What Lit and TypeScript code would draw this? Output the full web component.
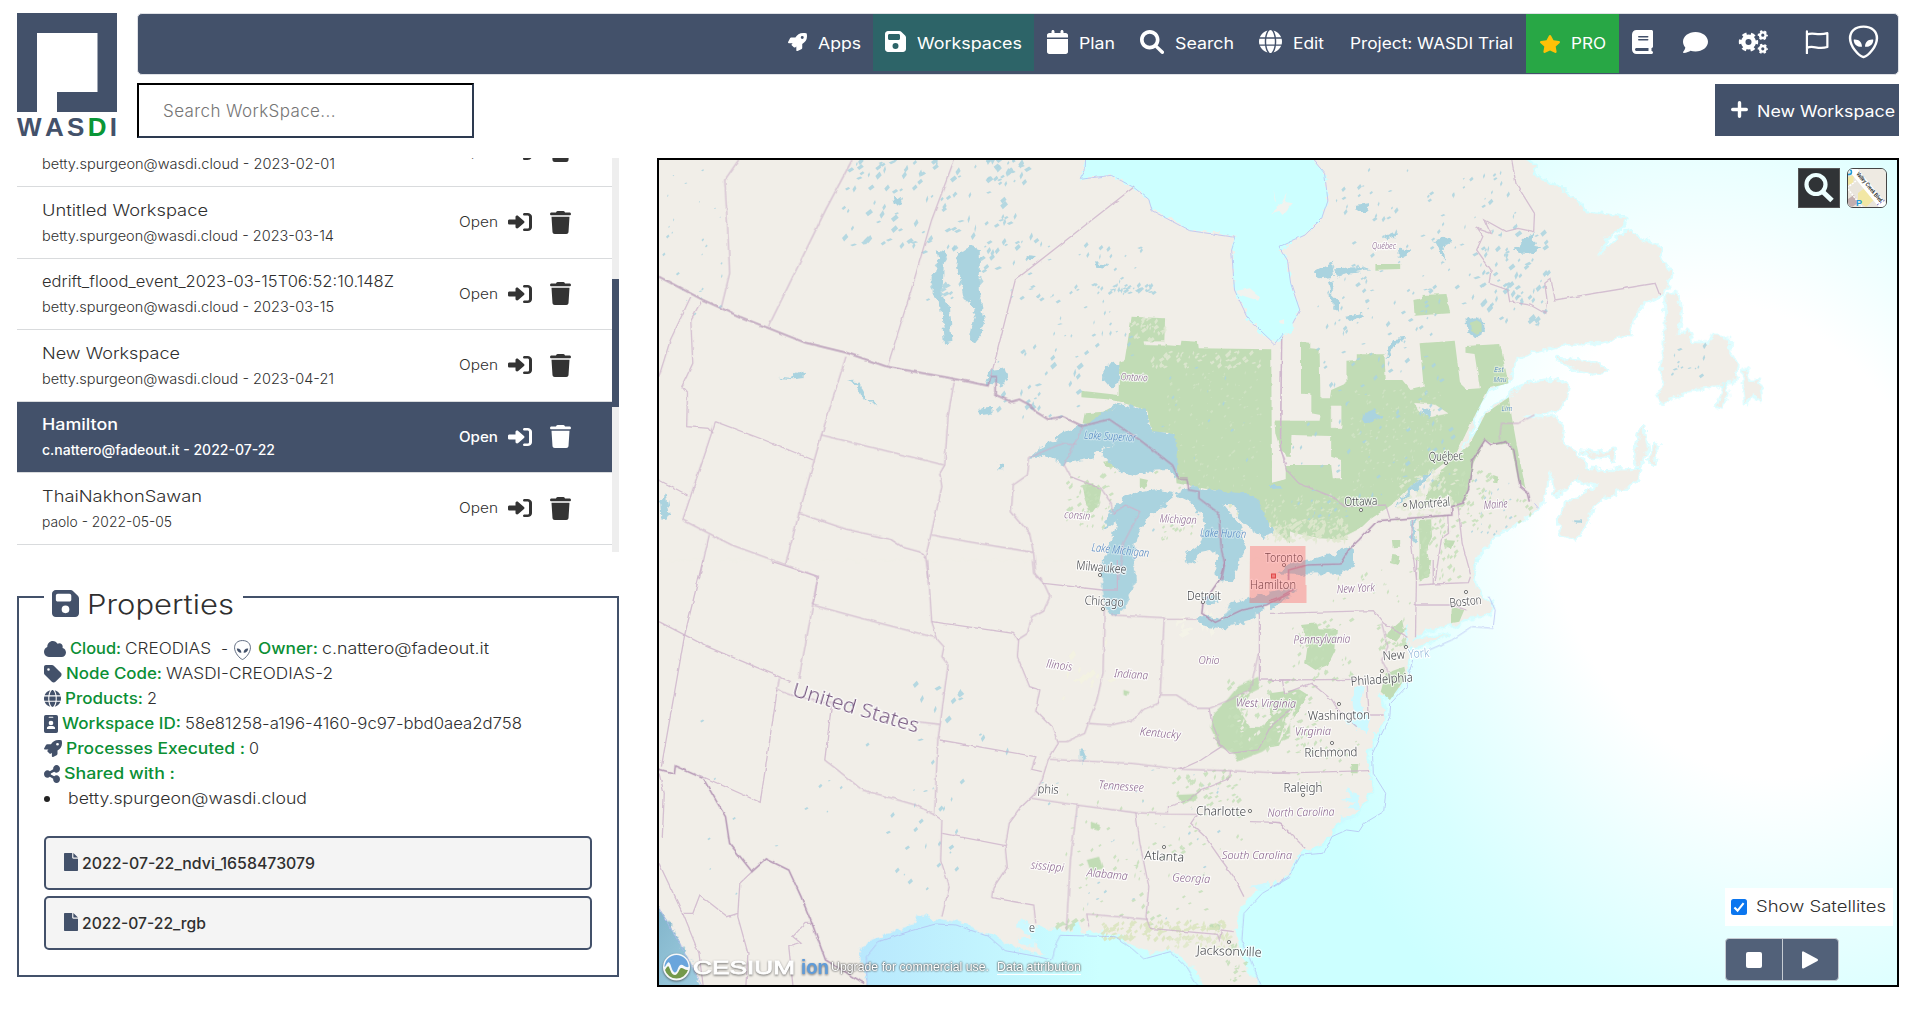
import { LitElement, html, svg, css } from "lit";
import { customElement, property } from "lit/decorators.js";

/* ---------- icons ---------- */
type Glyph = { box: string; body: unknown };
const p = (box: string, d: string): Glyph => ({ box, body: svg`<path fill="currentColor" fill-rule="evenodd" d=${d}></path>` });
const gear = (x: number, y: number, r: number, teeth: number) => {
  const c = 2 * Math.PI * r;
  const dash = c / teeth / 2;
  return svg`<circle cx=${x} cy=${y} r=${r * 0.66} fill="none" stroke="currentColor" stroke-width=${r * 0.56}></circle>
    <circle cx=${x} cy=${y} r=${r} fill="none" stroke="currentColor" stroke-width=${r * 0.42} stroke-dasharray="${dash} ${dash}" stroke-dashoffset=${dash / 2}></circle>`;
};
const GLYPHS: Record<string, Glyph> = {
  rocket: p("0 0 512 512", "M505.1 19.1c-1.2-5.5-6.7-11-12.2-12.2C460.7 0 435.5 0 410.4 0 307.2 0 245.3 55.2 199 128H94.8c-16.3 0-35.5 11.9-42.9 26.5L2.5 253.3A28.4 28.4 0 0 0 0 264a24 24 0 0 0 24 24h103.8l-22.5 22.5c-11.4 11.3-13 32.2 0 45.2l50.9 50.9c11.2 11.2 32.2 13.2 45.3 0L224 384.2V488a24 24 0 0 0 24 24 28.6 28.6 0 0 0 10.7-2.5l98.7-49.4c14.7-7.3 26.5-26.5 26.5-42.9V312.8C456.5 266.5 512 204.4 512 101.7c0-25.2 0-50.4-6.9-82.6ZM384 168a40 40 0 1 1 40-40 40 40 0 0 1-40 40Z"),
  save: p("0 32 448 448", "M64 32C28.7 32 0 60.7 0 96V416c0 35.3 28.7 64 64 64H384c35.3 0 64-28.7 64-64V173.3c0-17-6.7-33.3-18.7-45.3L352 50.7C340 38.7 323.7 32 306.7 32H64zm0 96c0-17.7 14.3-32 32-32H288c17.7 0 32 14.3 32 32v64c0 17.7-14.3 32-32 32H96c-17.7 0-32-14.3-32-32V128zM224 288a64 64 0 1 1 0 128 64 64 0 1 1 0-128z"),
  calendar: p("0 0 448 512", "M96 32V64H48C21.5 64 0 85.5 0 112v48H448V112c0-26.5-21.5-48-48-48H352V32c0-17.7-14.3-32-32-32s-32 14.3-32 32V64H160V32c0-17.7-14.3-32-32-32S96 14.3 96 32zM448 192H0V464c0 26.5 21.5 48 48 48H400c26.5 0 48-21.5 48-48V192z"),
  search: p("0 0 512 512", "M416 208c0 45.9-14.9 88.3-40 122.7L502.6 450c14 14 14 38 0 52s-38 14-52 0L325 380c-34 24-74 36-117 36C93.1 416 0 322.9 0 208S93.1 0 208 0S416 93.1 416 208zM208 338a130 130 0 1 0 0-260 130 130 0 1 0 0 260z"),
  globe: p("0 0 512 512", "M352 256c0 22.2-1.2 43.6-3.3 64H163.3c-2.2-20.4-3.3-41.8-3.3-64s1.2-43.6 3.3-64H348.7c2.2 20.4 3.3 41.8 3.3 64zm28.8-64H503.9c5.3 20.5 8.1 41.9 8.1 64s-2.8 43.5-8.1 64H380.8c2.1-20.6 3.2-42 3.2-64s-1.1-43.4-3.2-64zm112.6-32H376.7c-10-63.9-29.8-117.4-55.3-151.6c78.3 20.7 142 77.5 171.9 151.6zm-149.1 0H167.7c6.1-36.4 15.5-68.6 27-94.7c10.5-23.6 22.2-40.7 33.5-51.5C239.4 3.2 248.7 0 256 0s16.6 3.2 27.8 13.8c11.3 10.8 23 27.9 33.5 51.5c11.6 26 20.9 58.2 27 94.7zm-209 0H18.6C48.6 85.9 112.2 29.1 190.6 8.4C165.1 42.6 145.3 96.1 135.3 160zM8.1 192H131.2c-2.1 20.6-3.2 42-3.2 64s1.1 43.4 3.2 64H8.1C2.8 299.5 0 278.1 0 256s2.8-43.5 8.1-64zM194.7 446.6c-11.6-26-20.9-58.2-27-94.6H344.3c-6.1 36.4-15.5 68.6-27 94.6c-10.5 23.6-22.2 40.7-33.5 51.5C272.6 508.8 263.3 512 256 512s-16.6-3.2-27.8-13.8c-11.3-10.8-23-27.9-33.5-51.5zM135.3 352c10 63.9 29.8 117.4 55.3 151.6C112.2 482.9 48.6 426.1 18.6 352H135.3zm358.1 0c-30 74.1-93.6 130.9-171.9 151.6c25.5-34.2 45.2-87.7 55.3-151.6H493.4z"),
  star: p("24 0 528 512", "M316.9 18C311.6 7 300.4 0 288.1 0s-23.4 7-28.8 18L195 150.3 51.4 171.5c-12 1.8-22 10.2-25.7 21.7s-.7 24.2 7.9 32.7L137.8 329 113.2 474.7c-2 12 3 24.2 12.9 31.3s23 8 33.8 2.3l128.3-68.5 128.3 68.5c10.8 5.7 23.9 4.9 33.8-2.3s14.9-19.3 12.9-31.3L438.5 329 542.7 225.9c8.6-8.5 11.7-21.2 7.9-32.7s-13.7-19.9-25.7-21.7L381.2 150.3 316.9 18z"),
  book: p("0 0 448 512", "M96 0C43 0 0 43 0 96V416c0 53 43 96 96 96H384h32c17.7 0 32-14.3 32-32s-14.3-32-32-32V384c17.7 0 32-14.3 32-32V32c0-17.7-14.3-32-32-32H384 96zm0 384H352v64H96c-17.7 0-32-14.3-32-32s14.3-32 32-32zm32-240c0-8.8 7.2-16 16-16H336c8.8 0 16 7.2 16 16s-7.2 16-16 16H144c-8.8 0-16-7.2-16-16zm16 48H336c8.8 0 16 7.2 16 16s-7.2 16-16 16H144c-8.8 0-16-7.2-16-16s7.2-16 16-16z"),
  comment: p("0 32 512 448", "M512 240c0 114.9-114.6 208-256 208c-37.1 0-72.3-6.4-104.1-17.9c-11.9 8.7-31.3 20.6-54.3 30.6C73.6 471.1 44.7 480 16 480c-6.5 0-12.3-3.9-14.8-9.9c-2.5-6-1.1-12.8 3.4-17.4c8-8 14-18 21.4-29c10-16.6 19.5-38.4 21.4-62.9C17.7 326.8 0 285.1 0 240C0 125.1 114.6 32 256 32s256 93.1 256 208z"),
  open: p("0 32 512 448", "M217.9 105.9L340.7 228.7c7.2 7.2 11.3 17.1 11.3 27.3s-4.1 20.1-11.3 27.3L217.9 406.1c-6.4 6.4-15 9.9-24 9.9c-18.7 0-33.9-15.2-33.9-33.9l0-62.1L32 320c-17.7 0-32-14.3-32-32l0-64c0-17.7 14.3-32 32-32l128 0 0-62.1c0-18.7 15.2-33.9 33.9-33.9c9 0 17.6 3.6 24 9.9zM352 416l64 0c17.7 0 32-14.3 32-32l0-256c0-17.7-14.3-32-32-32l-64 0c-17.7 0-32-14.3-32-32s14.3-32 32-32l64 0c53 0 96 43 96 96l0 256c0 53-43 96-96 96l-64 0c-17.7 0-32-14.3-32-32s14.3-32 32-32z"),
  trash: p("0 0 448 512", "M135.2 17.7L128 32H32C14.3 32 0 46.3 0 64S14.3 96 32 96H416c17.7 0 32-14.3 32-32s-14.3-32-32-32H320l-7.2-14.3C307.4 6.8 296.3 0 284.2 0H163.8c-12.1 0-23.2 6.8-28.6 17.7zM416 128H32L53.2 467c1.6 25.3 22.6 45 47.9 45H346.9c25.3 0 46.3-19.7 47.9-45L416 128z"),
  cloud: p("0 32 640 448", "M0 336c0 79.5 64.5 144 144 144H512c70.7 0 128-57.3 128-128c0-61.9-44-113.6-102.4-125.4c4.1-10.7 6.4-22.4 6.4-34.6c0-53-43-96-96-96c-19.7 0-38.1 6-53.3 16.2C367 64.2 315.3 32 256 32C167.6 32 96 103.6 96 192c0 2.7 .1 5.4 .2 8.1C40.2 219.8 0 273.2 0 336z"),
  tag: p("0 32 448 448", "M0 80V229.5c0 17 6.7 33.3 18.7 45.3l176 176c25 25 65.5 25 90.5 0L418.7 317.3c25-25 25-65.5 0-90.5l-176-176c-12-12-28.3-18.7-45.3-18.7H48C21.5 32 0 53.5 0 80zm112 32a32 32 0 1 1 0 64 32 32 0 1 1 0-64z"),
  badge: p("0 0 384 512", "M48 0H336a48 48 0 0 1 48 48V464a48 48 0 0 1-48 48H48a48 48 0 0 1-48-48V48A48 48 0 0 1 48 0ZM144 48a16 16 0 0 0 0 32h96a16 16 0 0 0 0-32ZM192 160a64 64 0 1 0 0 128 64 64 0 1 0 0-128ZM150 310c-40 0-70 28-70 62v12c0 10 8 16 18 16H286c10 0 18-6 18-16v-12c0-34-30-62-70-62Z"),
  share: p("0 32 448 448", "M352 224c53 0 96-43 96-96s-43-96-96-96s-96 43-96 96c0 4 .2 8 .7 11.9l-94.1 47C145.4 170.2 121.9 160 96 160c-53 0-96 43-96 96s43 96 96 96c25.9 0 49.4-10.2 66.6-26.9l94.1 47c-.5 3.9-.7 7.8-.7 11.9c0 53 43 96 96 96s96-43 96-96s-43-96-96-96c-25.9 0-49.4 10.2-66.6 26.9l-94.1-47c.5-3.9 .7-7.8 .7-11.9s-.2-8-.7-11.9l94.1-47C302.6 213.8 326.1 224 352 224z"),
  file: p("0 0 384 512", "M20 0H224V128c0 17.7 14.3 32 32 32H384V492c0 12-8 20-20 20H20c-12 0-20-8-20-20V20C0 8 8 0 20 0zM384 128H256V0L384 128z"),
  plus: { box: "0 0 18 18", body: svg`<path d="M9 1.8V16.2M1.8 9H16.2" stroke="currentColor" stroke-width="3.6" stroke-linecap="round"></path>` },
  gears: { box: "0 0 31 24", body: svg`${gear(10.5, 12, 8, 6)}${gear(24.8, 5.2, 4.2, 6)}${gear(24.8, 18.8, 4.2, 6)}` },
  flag: { box: "0 0 25 24", body: svg`<path d="M2 1.4V23.2M2 4.600C8 1.800 13 6 23.300 3.200V17C13 20 8 14.600 2 18" fill="none" stroke="currentColor" stroke-width="2.300" stroke-linecap="round" stroke-linejoin="round"></path>` },
  alien: { box: "0 0 30 36", body: svg`<path d="M15 1.8C6.5 1.8 2 7 2 14c0 8.500 8 18.500 13 20 5-1.500 13-11.500 13-20C28 7 23.500 1.800 15 1.800Z" fill="none" stroke="currentColor" stroke-width="2.400"></path><path d="M5.500 15.500c5-.500 8 2.500 8 7.500-4.500.3-8-2.500-8-7.500ZM24.500 15.500c-5-.500-8 2.500-8 7.500 4.500.3 8-2.500 8-7.500Z" fill="currentColor"></path>` },
  alienThin: { box: "0 0 30 36", body: svg`<path d="M15 1C6 1 1 6.500 1 14c0 9 9 19.500 14 21 5-1.500 14-12 14-21C29 6.500 24 1 15 1Z" fill="none" stroke="currentColor" stroke-width="1.500"></path><path d="M5 15.500c5-.500 8 2.500 8 7.500-4.500.3-8-2.500-8-7.500ZM25 15.500c-5-.500-8 2.500-8 7.500 4.500.3 8-2.500 8-7.500Z" fill="currentColor"></path>` },
};
const icon = (name: string, w: number, h: number) =>
  html`<svg class="ico" width=${w} height=${h} viewBox=${GLYPHS[name].box} preserveAspectRatio="none" aria-hidden="true">${GLYPHS[name].body}</svg>`;

/* ---------- text widened to a set measure ---------- */
@customElement("wide-text")
class WideText extends LitElement {
  static styles = css`
    :host { display: inline-block; flex: none; white-space: pre; text-align: left; }
    .ink { display: inline-block; transform-origin: 0 50%; }
  `;
  @property() text = "";
  @property({ type: Number }) measure = 0;
  render() {
    return html`<span class="ink">${this.text}</span>`;
  }
  updated() {
    const ink = this.renderRoot.querySelector<HTMLElement>(".ink")!;
    ink.style.transform = "none";
    const natural = ink.getBoundingClientRect().width;
    this.style.width = `${this.measure}px`;
    ink.style.transform = `scaleX(${(this.measure / natural).toFixed(4)})`;
  }
}
const t = (text: string, measure: number, cls = "") =>
  html`<wide-text class=${cls} text=${text} measure=${measure}></wide-text>`;

/* ---------- map data: four quadrants, each with its own grid ---------- */
const QUAD: Record<string, string> = {
  nw: "translate(650 150) scale(.40816 .33333)",
  ne: "translate(1270 150) scale(.41327 .33333)",
  sw: "translate(650 560) scale(.40816 .33333)",
  se: "translate(1270 560) scale(.41327 .33333)",
};
type Shapes = Record<string, string[]>;

const LAND: Shapes = {
  nw: ["0,0 1568,0 1568,1290 0,1290"],
  ne: [
    "0,0 600,0 620,30 640,50 632,75 690,110 740,150 760,183 862,205 850,230 820,255 805,285 792,320 820,290 865,240 900,270 940,290 950,340 970,375 950,430 905,460 880,500 866,550 800,578 720,580 650,600 600,618 585,650 580,690 555,705 530,715 512,750 490,810 480,870 455,908 468,900 482,880 500,850 522,790 580,740 600,715 640,697 690,690 720,708 715,745 695,780 650,788 610,800 650,806 690,800 708,830 705,870 720,895 757,930 765,955 740,990 720,1015 690,1032 684,960 674,985 660,1040 650,1075 620,1100 585,1130 550,1150 520,1190 502,1215 490,1260 484,1290 0,1290",
    "695,628 750,632 790,645 815,664 780,670 735,655",
    "960,440 985,430 993,480 985,560 1010,545 1022,580 1060,582 1075,560 1112,570 1110,610 1130,650 1125,690 1090,704 1060,712 1010,720 980,740 945,757 938,738 960,700 948,660 955,590 958,520",
    "1150,660 1160,700 1182,690 1188,752 1165,730 1150,756 1145,700",
    "1100,700 1108,735 1090,772 1082,768 1096,735",
    "745,955 800,965 895,960 888,990 840,1022 802,1050 780,1072 770,1110 735,1168 705,1150 700,1110 722,1060 765,1030 800,1000 770,995 752,1000",
    "902,830 912,900 892,950 884,925 895,850",
    "756,905 790,914 832,900 830,932 815,915 780,920",
    "930,885 940,890 925,940 918,930",
  ],
  sw: ["0,0 1568,0 1568,945 1500,975 1470,1010 1442,1050 1436,1110 1445,1180 1465,1230 1490,1275 1490,1300 1362,1300 1350,1255 1310,1200 1275,1168 1235,1180 1190,1160 1160,1130 1120,1118 1060,1114 1042,1080 1030,1112 1000,1108 950,1102 912,1085 930,1130 965,1185 900,1165 870,1140 800,1110 760,1085 700,1075 655,1062 650,1090 580,1120 530,1145 513,1180 520,1230 530,1300 130,1300 100,1200 60,1110 0,1000"],
  se: [
    "0,0 495,0 484,40 500,90 515,120 538,128 532,160 500,165 470,178 440,195 400,200 362,220 345,240 335,262 332,340 300,400 285,415 262,390 270,430 278,460 262,510 242,560 230,575 240,640 246,690 225,730 200,765 160,790 130,850 80,870 60,900 45,940 0,978",
    "338,246 380,235 425,224 390,245 350,260",
  ],
};
const FOREST: Shapes = {
  nw: [
    "1180,500 1262,505 1260,582 1300,586 1302,572 1340,575 1342,595 1522,598 1524,1000 1568,985 1568,1180 1520,1130 1450,1050 1400,1025 1290,1000 1282,850 1230,845 1215,780 1150,755 1120,748 1057,742 1057,722 1148,735 1150,635 1163,630",
    "1060,820 1065,790 1110,785 1160,752 1120,790 1080,825",
    "1060,1005 1085,1000 1106,1020 1100,1060 1082,1090 1068,1060",
    "1110,935 1145,930 1140,955 1118,950",
    "1200,985 1220,990 1212,1018 1200,1010",
    "1530,812 1568,812 1568,920 1545,900 1532,850",
  ],
  ne: [
    "75,575 95,578 95,595 120,598 122,745 145,745 148,720 185,700 185,632 210,630 210,613 277,613 280,690 320,690 340,720 372,710 362,580 447,572 460,700 475,718 508,715 495,612 473,608 473,588 557,582 577,700 530,715 490,810 450,912 400,960 350,1000 300,1060 240,1110 190,1170 120,1165 60,1150 0,1120 0,1000 38,988 38,945 148,945 152,985 172,985 172,930 148,920 148,858 52,855 50,920 40,920 15,850 12,812 120,812 122,795 100,790 100,730 75,728",
    "482,885 522,790 578,742 585,800 598,890 618,1015 602,1000 582,880 545,885 520,870 492,940 475,1050 440,1070 430,1035 400,1050 370,1070 390,1000 420,955",
    "347,450 367,445 367,435 427,432 436,490 350,497",
    "255,342 315,342 315,357 255,359",
    "360,1110 390,1108 392,1160 378,1200 388,1270 360,1290 362,1200",
    "422,1170 448,1172 440,1195 424,1190",
    "295,1170 315,1170 315,1190 297,1192",
    "296,1215 313,1218 310,1245 292,1240",
    "540,975 552,980 550,1000 540,998",
  ],
  sw: [
    "1440,380 1490,350 1495,385 1470,400 1455,440 1470,480 1500,505 1520,460 1568,440 1568,530 1530,550 1500,575 1440,605 1430,580 1395,560 1372,500 1380,460 1410,425",
    "1290,705 1340,702 1340,722 1300,724",
    "1080,785 1102,795 1098,812 1080,805",
    "1070,900 1100,890 1110,925 1080,935",
    "1372,1092 1398,1092 1396,1110 1374,1108",
    "1160,390 1175,395 1170,408 1160,405",
  ],
  se: [
    "75,195 112,190 118,205 162,207 158,270 140,315 110,330 85,310 92,250",
    "0,400 70,388 92,405 70,450 40,500 22,560 0,565",
    "292,210 320,180 325,215 305,245 280,225",
    "280,340 325,320 330,350 290,420 268,395",
    "370,0 390,0 385,50 362,65",
    "440,140 470,150 458,185 438,190",
    "198,612 214,612 212,640 198,640",
  ],
};
const PALE: Shapes = {
  nw: ["1210,575 1260,575 1260,586 1212,584"],
  ne: ["148,768 172,768 172,833 148,833", "350,760 400,765 430,790 390,800 360,780", "180,1160 260,1110 330,1040 345,1060 300,1110 200,1180"],
  sw: ["1440,440 1490,430 1520,470 1500,500 1470,500"],
  se: ["60,440 40,480 20,550 45,500"],
};
const LAKES: Shapes = {
  nw: [
    "780,288 808,300 808,420 812,460 820,510 810,560 795,582 783,575 790,520 800,480 770,440 760,380 750,350 755,310",
    "700,300 728,310 720,340 716,440 735,470 741,575 720,581 715,500 710,460 690,440 690,380 705,350",
    "930,922 960,890 1010,852 1060,828 1110,788 1150,762 1215,780 1228,842 1285,853 1293,920 1290,985 1275,960 1220,962 1190,976 1155,965 1120,930 1105,905 1140,884 1100,903 1085,925 1040,935 1010,942 985,928 960,915",
    "1190,1030 1240,1018 1285,1030 1270,1060 1232,1090 1205,1130 1190,1180 1185,1230 1190,1290 1108,1290 1110,1240 1130,1180 1145,1110 1118,1135 1108,1138 1130,1080 1160,1045",
    "1285,1032 1330,1008 1400,1022 1480,1035 1500,1080 1528,1150 1500,1162 1450,1120 1430,1062 1405,1062 1442,1120 1460,1180 1445,1230 1428,1290 1390,1290 1385,1200 1345,1210 1320,1242 1314,1210 1350,1180 1360,1120 1330,1060",
    "1115,645 1150,640 1150,700 1130,716 1112,690",
    "835,660 870,655 880,690 850,705 825,700",
    "595,140 620,145 615,165 600,160",
    "810,775 840,770 842,790 810,796",
    "918,315 948,318 940,328 918,326",
    "852,938 866,938 866,958 854,958",
    "25,1060 38,1030 48,1090 40,1110 28,1108",
    "1095,340 1125,345 1118,354 1098,350",
    "315,680 340,683 372,665 378,662 376,684 350,688 318,685",
    "480,694 505,692 518,706 528,750 560,762 535,764 517,735 505,700",
  ],
  ne: [
    "18,1272 45,1248 100,1228 160,1208 178,1188 200,1195 203,1240 170,1272 60,1274",
    "0,1005 30,1005 30,1016 0,1016",
    "590,300 620,262 635,255 640,290 660,295 630,310 600,312",
    "275,262 312,242 308,255 285,268",
    "398,270 430,262 445,275 420,290 425,330 410,300",
    "108,365 150,335 155,380 120,385",
    "140,390 155,400 150,430 170,455 165,490 152,470",
    "280,610 300,565 325,560 300,590 280,630",
    "205,165 240,160 235,180 210,180",
    "365,778 390,780 388,800 370,796",
    "230,790 250,780 270,800 245,822 225,810",
    "155,355 230,350 240,358 180,372 160,380",
    "310,300 340,298 330,315 312,320",
    "182,500 222,492 225,498 190,510",
    "342,1110 352,1110 350,1180 342,1180",
    "740,1108 750,1108 750,1118 740,1118",
    "350,1000 400,955 360,1010 300,1075",
    "478,510 500,505 518,518 520,545 500,562 480,548",
  ],
  sw: [
    "1108,0 1187,0 1190,60 1165,140 1140,170 1118,150 1108,80",
    "1388,0 1430,0 1425,50 1400,65 1388,45",
    "1338,180 1362,165 1402,180 1422,130 1480,110 1568,80 1568,110 1520,130 1470,180 1400,206 1352,196",
    "1358,108 1390,112 1388,128 1362,130",
    "1310,0 1340,0 1325,10",
    "1055,562 1066,565 1062,612 1056,605",
  ],
  se: [
    "0,95 62,88 40,115 0,145",
    "18,46 50,10 110,-6 200,-30 200,20 170,44 60,40",
  ],
};
/* pale sea inlets cut into the land */
const INLETS: Shapes = {
  ne: ["430,795 460,797 488,808 460,803"],
  se: ["205,385 225,378 218,430 240,480 235,520 205,500 175,480 205,480 200,430", "210,700 180,690 200,710 175,720 205,730 180,745 215,745", "328,190 333,190 332,262 328,262", "170,765 205,775 180,785"],
  sw: ["905,1080 940,1105 925,1125 905,1100", "900,1130 950,1140 940,1160 910,1150", "1470,985 1520,960 1500,990"],
};
const BAY: Shapes = {
  nw: ["1067,0 1066,62 1054,88 1090,80 1130,76 1185,112 1222,148 1230,182 1280,205 1322,242 1395,246 1435,262 1425,300 1432,350 1428,420 1455,465 1465,505 1500,550 1530,582 1550,550 1562,540 1568,520 1568,395 1560,340 1535,300 1568,285 1568,0"],
  ne: ["0,0 85,0 105,30 132,70 140,150 125,205 85,255 22,290 42,330 50,400 72,480 55,520 56,560 40,548 20,580 0,570"],
};
const ISLES: Shapes = {
  nw: ["1437,422 1470,415 1495,440 1490,452 1440,432", "1522,190 1545,165 1560,130 1550,180", "1528,120 1534,160 1530,150"],
  ne: ["15,170 35,155 55,160 30,195", "22,512 34,508 34,522 24,520"],
};
const GROVES: Shapes = { ne: ["484,518 498,512 512,522 512,545 498,552 486,542"] };
const COASTAL: Shapes = {
  sw: ["532,1290 530,1190 560,1145 640,1112 700,1092 750,1095 830,1130 870,1172 950,1190 985,1200 995,1150 1005,1126 1140,1130 1180,1165 1210,1197 1275,1175 1310,1215 1345,1285", "1568,952 1500,1000 1455,1060 1450,1140 1500,1285", "130,1285 95,1200 60,1125 20,1040"],
  se: ["0,985 45,950 75,885 130,880 150,830 185,810 215,815 228,790 275,755 280,700 250,640 248,580 290,470 292,430 330,380 345,300", "385,270 440,240 490,200 540,205 545,150 530,110"],
  nw: ["1067,30 1066,62 1054,88 1130,76 1185,112 1222,148 1230,182 1322,242 1435,262 1425,300 1432,420 1465,505 1530,582 1550,550"],
  ne: ["105,30 132,70 140,150 125,205 85,255 22,290 42,330 50,400 72,480 55,520", "650,1075 640,1060"],
};
const FRONTIER: Shapes = {
  nw: ["22,380 130,450 220,500 380,578 480,608 580,650 740,685 828,707 835,680 848,680 848,735 885,755 905,748 930,765 945,785 975,808 1010,800 1060,828 1125,808 1200,870 1280,945 1295,985 1315,985 1320,1020 1345,1025 1345,1045 1393,1090 1400,1200 1408,1240 1400,1290"],
  ne: ["45,1290 45,1260 90,1245 170,1242 190,1200 215,1170 260,1112 440,1095 440,1070 465,1060 480,1020 490,930 520,870 535,885 570,875 590,900 605,1010 625,1030 630,1055"],
  sw: ["1410,0 1395,60 1355,130 1352,160 1385,187 1450,150 1510,135 1568,100", "22,628 60,640 62,618 130,655 185,770 195,850 250,935 285,897 340,930 370,1010 400,1100 430,1200 525,1270"],
  se: ["0,122 25,110 60,86"],
};
const BORDERS: Shapes = {
  nw: [
    "495,30 430,180 350,380 290,530", "745,30 690,210 640,420 583,645", "1185,112 895,390 835,680",
    "217,30 183,90 190,230 195,370 175,470", "100,440 50,570 22,680",
    "125,455 100,510 105,640 78,710 92,730 90,830 145,835 155,850", "160,815 280,870 400,930", "160,815 145,870 80,1110",
    "80,1110 200,1185 330,1243 412,1280", "480,620 420,855 365,1090 332,1243", "420,855 560,897 720,945",
    "745,695 730,800 722,945 710,970 715,1010 687,1160 675,1220 683,1290",
    "365,1090 480,1137 590,1168 620,1192 660,1205 675,1225", "690,1155 780,1175 938,1207",
    "930,922 925,975 890,1005 885,1085 930,1150 940,1210 945,1270 960,1290", "145,1155 120,1290", "22,990 92,1035",
    "930,922 1010,880 1045,885", "1060,830 1015,945 1030,980 1105,1015 1130,1060 1135,1090 1165,1065 1200,1085 1160,1180 1148,1290",
    "1548,560 1545,900 1560,940",
  ],
  ne: [
    "585,30 595,100 640,190 638,245 600,235 570,245 520,210 535,250 500,235 515,260 500,300 535,360 530,400 575,420 580,455 630,465 665,490 670,450 665,400 680,385 690,450 932,400 943,435",
    "28,560 25,890 40,960 70,1000 150,1040 180,1070 280,1065 290,1105", "345,1110 342,1180 355,1290",
    "455,1070 465,1180 485,1270", "430,1095 432,1150 415,1165 400,1290", "555,870 560,820 600,820 640,795",
  ],
  sw: [
    "130,0 85,225 28,620", "22,185 140,260 345,365", "300,5 412,50 365,355", "398,135 550,185 700,233", "412,50 398,135",
    "680,0 690,185 705,240 720,260 715,290 730,315 710,500 705,540 697,765",
    "690,185 890,220 903,240 900,290 930,380 955,390 945,450 985,500 1000,550 975,600 960,660 940,705 910,740 880,790 870,860 875,920 840,985 837,1013",
    "937,0 940,40 965,70 980,110 965,150 935,170 925,220 900,240", "965,70 1108,90 1145,90 1145,0", "1130,165 1260,173 1250,405",
    "1113,150 1110,340 1095,420 1065,520 1020,545 1000,545", "1250,405 1290,405 1340,445 1370,445 1420,420 1470,390 1490,285",
    "1260,178 1340,178", "1250,405 1245,430 1205,450 1185,480 1130,495 1070,490", "1493,155 1493,360 1568,360",
    "710,540 945,590 935,628 960,635", "980,598 1180,610 1300,628 1420,632 1568,640", "935,715 1045,735 1190,758 1270,762 1340,763",
    "1340,763 1325,790 1360,830 1400,900 1430,950 1455,1010", "1270,760 1270,740 1320,720 1350,690 1420,655 1422,632",
    "1190,758 1200,850 1222,980 1215,1070 1225,1105 1390,1123 1395,1140 1400,1110 1430,1115", "1075,1100 1070,1062 1220,1078", "1047,735 1030,900 1020,1110",
    "837,1013 940,1035 945,1090", "716,820 870,857", "697,765 715,780 712,900 733,980 715,1070",
    "345,405 445,430 428,600 460,630 520,690 580,710 650,735 697,765", "655,485 710,493", "317,355 312,390 345,405", "312,390 270,727 120,645",
    "1300,628 1350,600 1400,560 1375,480 1370,445", "1380,530 1420,580 1490,570 1520,500 1568,450", "1470,785 1540,787 1568,820",
    "22,640 35,700 30,835", "22,910 80,1060 105,1060 122,1005 190,1070 215,1060", "250,935 220,970 215,1070 240,1180 235,1275",
    "400,1090 380,1090 350,1130 370,1150 340,1160 350,1275", "80,1060 120,1180 130,1275",
  ],
  se: [
    "0,160 15,160 250,152 275,190 330,232", "355,0 352,235", "395,0 395,72 480,68 485,50", "360,75 395,72", "350,135 440,135 475,150",
    "0,360 230,358", "235,375 240,465 275,465", "0,640 240,632", "0,785 25,790 85,865", "270,190 285,260 270,300 300,370",
    "30,360 35,400 100,370 150,420 165,450 210,500",
  ],
};

/* small lakes and woods scattered over an area: x, y, w, h, count, size, colour */
type Scatter = [number, number, number, number, number, number, string];
const WATER = "#aad3df";
const WOOD = "#c6dfba";
const LAND_TINT = "#f1eee8";
const SCATTER: Scatter[] = [
  [840, 160, 190, 90, 110, 4, WATER], [920, 240, 75, 60, 40, 4, WATER], [1010, 240, 130, 120, 70, 3, WATER],
  [662, 165, 60, 150, 25, 2, WATER], [985, 160, 35, 22, 14, 5, WATER], [990, 360, 90, 60, 26, 4, WATER], [1085, 285, 70, 9, 30, 3, WATER],
  [1330, 170, 190, 140, 100, 3, WATER], [1470, 230, 80, 95, 60, 4, WATER], [1310, 290, 130, 80, 50, 3, WATER],
  [1670, 345, 34, 34, 14, 3, WATER], [1290, 370, 170, 130, 60, 3, WATER], [1130, 365, 130, 170, 24, 2.2, WATER],
  [1150, 352, 110, 16, 60, 3, "#dfe8d2"], [1130, 318, 35, 22, 30, 3, "#dfe8d2"],
  [1165, 370, 95, 120, 130, 1.8, "#d0e3c4"], [1350, 390, 90, 100, 160, 2, "#d0e3c4"], [1260, 495, 90, 35, 90, 2.4, "#d6e5c8"],
  [1265, 520, 80, 22, 110, 3.4, "#dfe8cf"], [1395, 470, 60, 50, 110, 3, "#e2ead4"], [1195, 495, 60, 22, 30, 3, "#dbe7c9"],
  [1065, 475, 45, 55, 60, 3, WOOD], [1105, 460, 55, 14, 30, 3, WOOD], [1160, 525, 50, 16, 20, 2.6, WOOD],
  [1455, 470, 35, 60, 50, 3, WOOD], [1412, 520, 45, 60, 60, 3, WOOD], [1500, 500, 30, 24, 12, 3, WOOD],
  [1290, 620, 60, 60, 50, 3, WOOD], [1375, 620, 30, 30, 30, 3, WOOD], [1330, 560, 80, 45, 18, 2.6, WOOD],
  [1225, 680, 90, 75, 90, 3.2, WOOD], [1235, 690, 60, 50, 60, 3, LAND_TINT], [1170, 770, 70, 35, 50, 3, WOOD],
  [1060, 790, 200, 70, 34, 2.4, WOOD], [1075, 840, 130, 85, 46, 3, WOOD], [1295, 740, 70, 50, 24, 2.2, WOOD],
  [880, 770, 80, 120, 24, 3, WATER], [910, 680, 100, 90, 14, 4, WATER], [1055, 920, 30, 10, 12, 4, WOOD],
  [1100, 922, 125, 18, 120, 3.5, "#d9e4bd"], [1165, 937, 65, 12, 50, 3, "#dfe8c9"], [1225, 945, 22, 36, 18, 3, WOOD],
  [670, 700, 200, 210, 14, 2.2, WATER], [1040, 770, 180, 150, 30, 2, WATER],
  [1290, 500, 60, 24, 16, 2.4, WATER], [1470, 480, 40, 60, 20, 2.2, WATER], [1060, 640, 50, 60, 14, 5, "#f3f2e0"], [1175, 612, 36, 36, 14, 7, "#f5f3e8"],
];
const scatterPath = (s: Scatter, seed: number) => {
  let state = seed * 7919 + 17;
  const rnd = () => ((state = (state * 16807) % 2147483647) / 2147483647);
  let d = "";
  for (let i = 0; i < s[4]; i++) {
    const x = s[0] + rnd() * s[2];
    const y = s[1] + rnd() * s[3];
    const w = s[5] * (0.3 + rnd());
    const h = s[5] * (0.3 + rnd() * 0.9);
    d += `M${x.toFixed(1)} ${y.toFixed(1)}l${w.toFixed(1)} ${(-h).toFixed(1)}l${(w * 0.5).toFixed(1)} ${(h * 0.8).toFixed(1)}l${(-w).toFixed(1)} ${h.toFixed(1)}z`;
  }
  return svg`<path d=${d} fill=${s[6]} opacity=".85"></path>`;
};

const areas = (set: Shapes, cls: string) =>
  Object.entries(set).map(([q, list]) => svg`<g transform=${QUAD[q]}>${list.map((pts) => svg`<polygon class=${cls} points=${pts}></polygon>`)}</g>`);
const lines = (set: Shapes, cls: string) =>
  Object.entries(set).map(([q, list]) => svg`<g transform=${QUAD[q]}>${list.map((pts) => svg`<polyline class=${cls} points=${pts}></polyline>`)}</g>`);

/* name, centre x, centre y, drawn width, size, kind, tilt */
type Label = [string, number, number, number, number, string, number];
const LABELS: Label[] = [
  ["Ontario", 1134, 377, 27, 10, "state", 3], ["Lake Superior", 1110, 436, 52, 11, "lake", 3], ["consin", 1077, 515, 26, 11, "state", 4],
  ["Michigan", 1178, 519, 37, 11.5, "state", 3], ["Lake Huron", 1223, 533, 46, 11.5, "lake", 2], ["Lake Michigan", 1120, 550, 58, 11.5, "lake", 6],
  ["Milwaukee", 1101, 567, 50, 12.5, "city", 5], ["Chicago", 1104, 601, 39, 12.5, "city", 3], ["Detroit", 1204, 595, 34, 12.5, "city", 0],
  ["Hamilton", 1273, 584, 46, 12.5, "city", 0], ["Toronto", 1284, 557, 38, 12.5, "city", 0], ["llinois", 1059, 665, 26, 11.5, "state", 7],
  ["Indiana", 1131, 674, 34, 11.5, "state", 4], ["Ohio", 1209, 660, 21, 11.5, "state", 0], ["West Virginia", 1266, 703, 60, 11.5, "state", 1],
  ["Kentucky", 1160, 733, 41, 11.5, "state", 5], ["Tennessee", 1121, 786, 45, 11.5, "state", 4], ["phis", 1048, 789, 21, 12.5, "city", 3],
  ["Charlotte", 1221, 811, 50, 12.5, "city", 1], ["North Carolina", 1301, 812, 67, 11.5, "state", -1], ["Atlanta", 1164, 856, 40, 12.5, "city", 3],
  ["South Carolina", 1257, 855, 70, 11.5, "state", 0], ["Georgia", 1191, 878, 38, 11.5, "state", 3], ["Alabama", 1107, 874, 41, 11.5, "state", 5],
  ["sissippi", 1047, 866, 33, 11.5, "state", 6], ["Jacksonville", 1229, 951, 65, 12.5, "city", 2], ["e", 1032, 928, 6, 12, "city", 0],
  ["Québec", 1384, 246, 24, 8.5, "state", 0], ["Québec", 1446, 456, 34, 12.5, "city", -2], ["Ottawa", 1361, 501, 33, 12.5, "city", -2],
  ["Montréal", 1430, 503, 41, 12.5, "city", -5], ["Maine", 1496, 504, 24, 11.5, "state", -5], ["New York", 1356, 588, 38, 11.5, "state", -3],
  ["Boston", 1466, 601, 32, 12.5, "city", -6], ["Pennsylvania", 1322, 639, 57, 11.5, "state", -1], ["New", 1394, 655, 22, 12.5, "city", -4],
  ["York", 1419, 653, 21, 12.5, "sea", -4], ["Philadelphia", 1382, 679, 62, 12.5, "city", -4], ["Washington", 1339, 715, 62, 12.5, "city", -1],
  ["Virginia", 1313, 731, 36, 11.5, "state", -1], ["Richmond", 1331, 752, 53, 12.5, "city", -1], ["Raleigh", 1303, 787, 39, 12.5, "city", 0],
  ["Est", 1499, 369, 10, 8, "lake", 0], ["Mau", 1500, 379, 13, 8, "lake", 0], ["Lim", 1507, 408, 11, 8, "lake", 0],
  ["United States", 854, 707, 131, 20, "country", 16.5],
];
const DOTS = [[1100, 575], [1103, 609], [1203, 602], [1284, 565], [1446, 463], [1361, 510], [1405, 505], [1466, 592], [1406, 647], [1382, 671], [1339, 704], [1332, 743], [1303, 795], [1250, 811], [1164, 847], [1229, 942]];

@customElement("world-map")
class WorldMap extends LitElement {
  static styles = css`
    :host { display: block; }
    .canvas { display: block; width: 1238px; height: 825px; }
    .land { fill: #f1eee8; stroke: #f1eee8; stroke-width: .6; vector-effect: non-scaling-stroke; }
    .halo { fill: none; stroke: #c4fbff; stroke-width: 5; stroke-linejoin: round; vector-effect: non-scaling-stroke; opacity: .55; }
    .forest { fill: #c1dcb5; }
    .lake-area { fill: #aad3df; }
    .inlet { fill: #cdf9ff; }
    .bay { fill: #ccffff; }
    .isle { fill: #f1f3ef; }
    .coastal { fill: none; stroke: #b3b9f0; stroke-width: 1; opacity: .7; vector-effect: non-scaling-stroke; }
    .frontier { fill: none; stroke: #ae8fb0; stroke-width: 1.5; opacity: .75; vector-effect: non-scaling-stroke; }
    .frontier-glow { fill: none; stroke: #c9b0c8; stroke-width: 3; opacity: .25; vector-effect: non-scaling-stroke; }
    .border { fill: none; stroke: #cdb3cb; stroke-width: 1.3; opacity: .8; vector-effect: non-scaling-stroke; }
    text { font-family: "Noto Sans", "Open Sans", sans-serif; paint-order: stroke; stroke: rgba(255, 255, 255, .75); stroke-width: 2.5px; stroke-linejoin: round; }
    .city { fill: #3d3f44; }
    .sea { fill: #8eb4d8; stroke: #fff; }
    .state { fill: #86608b; font-style: italic; }
    .lake { fill: #5286c2; font-style: italic; stroke: rgba(255, 255, 255, .35); }
    .country { fill: #70507a; }
    .dot { fill: #fff; stroke: #666; stroke-width: .9; }
  `;
  render() {
    return html`<svg class="canvas" viewBox="659 160 1238 825">
      <defs>
        <radialGradient id="glare" gradientUnits="userSpaceOnUse" cx="0" cy="0" r="1" gradientTransform="translate(1745 540) rotate(-20) scale(500 640)">
          <stop offset="0" stop-color="#fff"></stop><stop offset=".38" stop-color="#fff"></stop>
          <stop offset=".6" stop-color="#eaffff"></stop><stop offset=".8" stop-color="#d8ffff"></stop><stop offset="1" stop-color="#ccffff"></stop>
        </radialGradient>
        <linearGradient id="gulf" gradientUnits="userSpaceOnUse" x1="860" y1="0" x2="1100" y2="0">
          <stop offset="0" stop-color="#b8e8fd"></stop><stop offset="1" stop-color="#ccffff"></stop>
        </linearGradient>
        <linearGradient id="pacific" x1="0" y1="0" x2="1" y2="1">
          <stop offset="0" stop-color="#7fb2c8"></stop><stop offset="1" stop-color="#a5d3e6"></stop>
        </linearGradient>
        <filter id="ragged" filterUnits="userSpaceOnUse" x="640" y="140" width="1280" height="860">
          <feTurbulence type="fractalNoise" baseFrequency=".13" numOctaves="3" seed="4"></feTurbulence>
          <feDisplacementMap in="SourceGraphic" scale="9" xChannelSelector="R" yChannelSelector="G"></feDisplacementMap>
        </filter>
        <filter id="ripple" filterUnits="userSpaceOnUse" x="640" y="140" width="1280" height="860">
          <feTurbulence type="fractalNoise" baseFrequency=".12" numOctaves="2" seed="9"></feTurbulence>
          <feDisplacementMap in="SourceGraphic" scale="3" xChannelSelector="R" yChannelSelector="G"></feDisplacementMap>
        </filter>
      </defs>
      <rect x="659" y="160" width="1238" height="825" fill="url(#glare)"></rect>
      <rect x="659" y="880" width="460" height="110" fill="url(#gulf)"></rect>
      <rect x="659" y="890" width="60" height="100" fill="url(#pacific)"></rect>
      <g filter="url(#ragged)">
        ${areas({ ne: LAND.ne, se: LAND.se }, "halo")}
        ${areas(LAND, "land")} ${areas(BAY, "bay")} ${areas(INLETS, "inlet")}
      </g>
      <g filter="url(#ripple)">${areas(FOREST, "forest")} ${areas(PALE, "land")} ${areas(ISLES, "isle")}</g>
      ${SCATTER.map((s, i) => scatterPath(s, i + 3))}
      <g filter="url(#ragged)">${areas(LAKES, "lake-area")}</g>
      <g filter="url(#ripple)">
        ${areas(GROVES, "forest")}
        ${lines(COASTAL, "coastal")} ${lines(BORDERS, "border")} ${lines(FRONTIER, "frontier-glow")} ${lines(FRONTIER, "frontier")}
      </g>
      ${DOTS.map(([x, y]) => svg`<circle class="dot" cx=${x} cy=${y} r="1.6"></circle>`)}
      ${LABELS.map(([name, x, y, w, size, kind, tilt]) => svg`<text class=${kind} font-size=${size} text-anchor="middle" textLength=${w} lengthAdjust="spacingAndGlyphs" transform="translate(${x} ${y + size * 0.36}) rotate(${tilt})">${name}</text>`)}
      <path d="M1250 546H1305.500V585H1306.500V603H1249.500Z" fill="#ff5a5a" fill-opacity=".36"></path>
      <rect x="1271.500" y="574" width="4" height="4" fill="#f08080" stroke="#e04848"></rect>
    </svg>`;
  }
}

/* ---------- page ---------- */
const WORKSPACES = [
  { name: "Workspace", nameW: 92, meta: "betty.spurgeon@wasdi.cloud - 2023-02-01", metaW: 293 },
  { name: "Untitled Workspace", nameW: 166, meta: "betty.spurgeon@wasdi.cloud - 2023-03-14", metaW: 292 },
  { name: "edrift_flood_event_2023-03-15T06:52:10.148Z", nameW: 352, meta: "betty.spurgeon@wasdi.cloud - 2023-03-15", metaW: 292 },
  { name: "New Workspace", nameW: 138, meta: "betty.spurgeon@wasdi.cloud - 2023-04-21", metaW: 292 },
  { name: "Hamilton", nameW: 76, meta: "c.nattero@fadeout.it - 2022-07-22", metaW: 233, active: true },
  { name: "ThaiNakhonSawan", nameW: 160, meta: "paolo - 2022-05-05", metaW: 130 },
];
const NAV = [
  { icon: "rocket", w: 19, h: 18, label: "Apps", tw: 43 },
  { icon: "save", w: 21, h: 21, label: "Workspaces", tw: 105, active: true },
  { icon: "calendar", w: 21, h: 24, label: "Plan", tw: 36 },
  { icon: "search", w: 24, h: 24, label: "Search", tw: 59 },
  { icon: "globe", w: 23, h: 23, label: "Edit", tw: 31 },
];

@customElement("app-root")
class AppRoot extends LitElement {
  static styles = css`
    :host { display: block; width: 1918px; height: 1009px; overflow: hidden; background: #fff; color: #2f2f2f; font: 300 15.500px/24px Inter, "Open Sans", sans-serif; }
    * { box-sizing: border-box; }
    .ico { display: block; flex: none; }
    .page { display: flex; flex-direction: column; padding: 13px 19px 0 17px; }
    .top { display: flex; height: 145px; }
    .brand { flex: none; width: 100px; }
    .logo { display: block; width: 100px; height: 99px; }
    .word { display: flex; justify-content: space-between; padding: 0; margin-top: 1px; color: #43516a; font: 700 26px/28px "Liberation Sans", Arial, sans-serif; }
    .word .green { color: #0a9636; }
    .head { flex: 1; margin-left: 20px; display: flex; flex-direction: column; gap: 8px; }
    .bar { height: 62px; background: #43516a; border: 1px solid #dfe1e6; border-radius: 5px; display: flex; justify-content: flex-end; padding-right: 19px; color: #fff; font-weight: 400; }
    .item { height: 57px; display: flex; align-items: center; gap: 11px; padding: 2px 12px 0; margin-left: 1px; }
    .item .ico { position: relative; top: -2px; }
    .item.active { background: #2d6468; margin-left: 0; }
    .item.plain { margin-left: 2px; }
    .item.pro { height: 59px; background: #28a745; padding: 1px 13px 0 14px; }
    .item.pro .ico { color: #ffc107; top: 0; }
    .tools { display: flex; align-items: center; height: 56px; padding-left: 13px; }
    .tools .wide { margin-left: 30px; }
    .tools .wider { margin-left: 36px; }
    .tools .near { margin-left: 19px; }
    .sub { display: flex; justify-content: space-between; align-items: flex-start; }
    .find { width: 337px; height: 55px; border: 2px inset #2d3a50; border-color: #000 #2d3a50 #2d3a50 #000; background: #fff; padding: 0 24px; font: 300 17px Inter, "Open Sans", sans-serif; letter-spacing: .4px; color: #333; outline: none; }
    .find::placeholder { color: #757575; opacity: 1; }
    .create { margin-top: 1px; width: 184px; height: 52px; background: #43516a; color: #fff; border: 0; padding: 2px 0 0 16px; display: flex; align-items: center; gap: 9px; font: 400 15.500px Inter, "Open Sans", sans-serif; }
    .create .ico { position: relative; top: -2px; }
    .body { display: flex; gap: 38px; height: 829px; }
    .side { width: 602px; display: flex; flex-direction: column; }
    .scroll { height: 394px; display: flex; overflow: hidden; }
    .rows { width: 595px; margin-top: -42.600px; }
    .row { height: 71.550px; border-bottom: 1px solid #d9dbdd; display: flex; align-items: center; padding: 0 41px 0 25px; }
    .row.active { background: #43516a; color: #fff; font-weight: 500; }
    .who { flex: 1; display: flex; flex-direction: column; padding-top: 1px; }
    .name { line-height: 25px; }
    .meta { font-size: 14px; line-height: 25px; }
    .open { font-size: 14px; margin-right: 10px; }
    .row .bin { margin-left: 18px; }
    .row .ico { color: #333; }
    .row.active .ico { color: #fff; }
    .track { width: 7px; background: #eee; padding-top: 121px; }
    .thumb { height: 128px; background: #43516a; }
    .props { position: relative; margin: 44px 0 0; padding: 0 25px; border: 2px solid #43516a; height: 381px; }
    .legend { position: absolute; left: 25px; top: -12px; display: flex; align-items: center; gap: 8px; padding: 0 9px 0 8px; height: 38px; background: #fff; margin: 0; font-weight: 300; font-size: 27px; line-height: 38px; color: #2f2f2f; }
    .legend .ico, .line .ico, .file .ico { color: #43516a; }
    .legend .ico { margin-top: -3px; }
    .lines { display: flex; flex-direction: column; margin-top: 38px; }
    .line { height: 25px; display: flex; align-items: center; }
    .line .ico { margin-right: 4px; }
    .key { color: #0b8f35; font-weight: 500; margin-right: 4px; }
    .dash { margin: 0 6px 0 10px; }
    .line .small { margin-right: 3px; margin-top: 3px; }
    .bullet { width: 6px; height: 6px; border-radius: 50%; background: #222; margin-right: 18px; }
    .files { display: flex; flex-direction: column; gap: 6px; margin-top: 25px; }
    .file { height: 54px; border: 2px solid #43516a; border-radius: 5px; background: #f4f4f4; display: flex; align-items: center; gap: 4px; padding: 1px 0 0 18px; font-weight: 500; }
    .file .ico { margin-top: -3px; }
    .map { position: relative; width: 1242px; height: 829px; border: 2px solid #000; overflow: hidden; }
    .tool { position: absolute; right: 57px; top: 8px; width: 42px; height: 40px; background: #303336; border: 1px solid #555; display: flex; align-items: center; justify-content: center; color: #edffff; }
    .layer { position: absolute; right: 10px; top: 8px; width: 40px; height: 40px; border: 1px solid #444; border-radius: 6px; overflow: hidden; }
    .sat { position: absolute; right: 4px; bottom: 59px; width: 168px; height: 38px; background: #fff; display: flex; align-items: center; gap: 9px; padding-left: 6px; }
    .check { display: block; flex: none; }
    .play { position: absolute; right: 58px; bottom: 4px; width: 114px; height: 43px; display: flex; background: #526179; border: 1px solid #c6ccd3; border-radius: 4px; }
    .play .cell { flex: 1; display: flex; align-items: center; justify-content: center; }
    .play .cell:first-child { border-right: 1px solid #c6ccd3; }
    .credit { position: absolute; left: 4px; bottom: 3px; height: 30px; display: flex; align-items: center; color: #fff; font: 400 12px/14px "Liberation Sans", Arial, sans-serif; text-shadow: 0 0 2px #444, 0 0 2px #666; }
    .cesium { display: block; width: 168px; height: 30px; filter: drop-shadow(0 1px 1px rgba(60, 60, 60, .7)); text-shadow: none; }
    .cesium text { font: 400 19px "Liberation Sans", Arial, sans-serif; }
    .cesium .ion { font-weight: 700; font-size: 21px; }
    .attr { display: block; margin-left: 8px; border-bottom: 1px solid #fff; line-height: 14px; }
  `;

  private row(w: (typeof WORKSPACES)[number]) {
    return html`<div class="row ${w.active ? "active" : ""}">
      <div class="who">${t(w.name, w.nameW, "name")}${t(w.meta, w.metaW, "meta")}</div>
      ${t("Open", 39, "open")} ${icon("open", 24, 18)}
      <span class="bin">${icon("trash", 21, 23)}</span>
    </div>`;
  }

  render() {
    return html`<div class="page">
      <header class="top">
        <div class="brand">
          <svg class="logo" viewBox="0 0 100 99"><path d="M0 0H100V99H40V79H80.500V20H20V99H0Z" fill="#43516a"></path></svg>
          <div class="word"><span>W</span><span>A</span><span>S</span><span class="green">D</span><span>I</span></div>
        </div>
        <div class="head">
          <nav class="bar">
            ${NAV.map((n) => html`<div class="item ${n.active ? "active" : ""}">${icon(n.icon, n.w, n.h)}${t(n.label, n.tw)}</div>`)}
            <div class="item plain">${t("Project: WASDI Trial", 163)}</div>
            <div class="item pro">${icon("star", 20, 18)}${t("PRO", 35)}</div>
            <div class="tools">
              ${icon("book", 21, 24)}
              <span class="wide">${icon("comment", 25, 21)}</span>
              <span class="wide">${icon("gears", 31, 24)}</span>
              <span class="wider">${icon("flag", 24, 24)}</span>
              <span class="near">${icon("alien", 31, 34)}</span>
            </div>
          </nav>
          <div class="sub">
            <input class="find" placeholder="Search WorkSpace..." aria-label="Search WorkSpace" />
            <button class="create">${icon("plus", 17, 17)}${t("New Workspace", 138)}</button>
          </div>
        </div>
      </header>
      <main class="body">
        <section class="side">
          <div class="scroll">
            <div class="rows">${WORKSPACES.map((w) => this.row(w))}</div>
            <div class="track"><div class="thumb"></div></div>
          </div>
          <div class="props">
            <h2 class="legend">${icon("save", 27, 27)}${t("Properties", 147)}</h2>
            <div class="lines">
              <div class="line">${icon("cloud", 22, 16)}${t("Cloud:", 51, "key")}${t("CREODIAS", 86)}<span class="dash">-</span><span class="small">${icon("alienThin", 17, 20)}</span>${t("Owner:", 60, "key")}${t("c.nattero@fadeout.it", 167)}</div>
              <div class="line">${icon("tag", 18, 18)}${t("Node Code:", 96, "key")}${t("WASDI-CREODIAS-2", 167)}</div>
              <div class="line">${icon("globe", 17, 17)}${t("Products:", 78, "key")}${t("2", 10)}</div>
              <div class="line">${icon("badge", 14, 18)}${t("Workspace ID:", 119, "key")}${t("58e81258-a196-4160-9c97-bbd0aea2d758", 337)}</div>
              <div class="line">${icon("rocket", 18, 17)}${t("Processes Executed :", 179, "key")}${t("0", 10)}</div>
              <div class="line">${icon("share", 16, 18)}${t("Shared with :", 111, "key")}</div>
              <div class="line"><span class="bullet"></span>${t("betty.spurgeon@wasdi.cloud", 239)}</div>
            </div>
            <div class="files">
              <div class="file">${icon("file", 14, 18)}${t("2022-07-22_ndvi_1658473079", 233)}</div>
              <div class="file">${icon("file", 14, 18)}${t("2022-07-22_rgb", 124)}</div>
            </div>
          </div>
        </section>
        <section class="map">
          <world-map></world-map>
          <div class="tool">
            <svg class="ico" width="32" height="32" viewBox="0 0 32 32"><circle cx="13" cy="12.500" r="9.500" fill="none" stroke="currentColor" stroke-width="4.200"></circle><path d="M19.500 19.500L29 28.500" stroke="currentColor" stroke-width="5"></path></svg>
          </div>
          <div class="layer">
            <svg class="ico" width="38" height="38" viewBox="0 0 38 38">
              <rect width="38" height="38" fill="#eeeae2"></rect>
              <path d="M0 0L8 8 24 24 34 38H0Z" fill="#e9e5dc"></path>
              <path d="M0 8L6 6 5 14 0 16ZM10 24L18 18 27 30 18 38 10 32Z" fill="#f2e7a4"></path>
              <path d="M0 30L6 26 10 34 4 38H0Z" fill="#c2afaf"></path>
              <path d="M3-2L36 38" stroke="#fff" stroke-width="8"></path>
              <path d="M0 20L14 38M8 12L0 18" stroke="#fff" stroke-width="1.500" stroke-dasharray="2 1"></path>
              <text transform="translate(8 5) rotate(50)" font-size="6" font-weight="600" textLength="37" lengthAdjust="spacingAndGlyphs" font-family="Liberation Sans, Arial, sans-serif" fill="#222">Valley Creek Blvd</text>
              <text x="8" y="37" font-size="9" font-weight="700" font-family="Liberation Sans, Arial, sans-serif" fill="#1e9bd7">P</text>
              <circle cx="1" cy="3" r="2.500" fill="none" stroke="#1e9bd7" stroke-width="1.500"></circle>
              <path d="M29 36L37 31" stroke="#7a6fc0" stroke-dasharray="2 1.500"></path>
            </svg>
          </div>
          <div class="credit">
            <svg class="cesium" viewBox="0 0 168 30">
              <circle cx="13.500" cy="15" r="13.500" fill="#f6f8fa"></circle>
              <path d="M1.500 15A12 12 0 0 1 25.500 15C22 16 20 12 17.500 13 14 15 15 21 11.500 20.500 8 19 8 9 5 10.500 3.500 11.500 2.500 15 1.500 15Z" fill="#6aa5dc"></path>
              <path d="M2 18C4 15 5 13 6 15 8 20 9 23 12 23 15 23 16 17 18 16 20 15.500 22 18.500 25 18A12 12 0 0 1 2 18Z" fill="#74994a"></path>
              <text x="30" y="22" textLength="102" lengthAdjust="spacingAndGlyphs" fill="#fff" stroke="#fff" stroke-width=".8">CESIUM</text>
              <text class="ion" x="138" y="22" textLength="28" lengthAdjust="spacingAndGlyphs" fill="#5f9bd8">ion</text>
            </svg>
            ${t("Upgrade for commercial use.", 158)}
            <span class="attr">${t("Data attribution", 84)}</span>
          </div>
          <div class="sat">
            <svg class="check" width="16" height="16" viewBox="0 0 16 16"><rect width="16" height="16" rx="2.500" fill="#0b76ef"></rect><path d="M3.400 8.400L6.600 11.600 12.600 4.200" fill="none" stroke="#fff" stroke-width="2.100"></path></svg>
            ${t("Show Satellites", 130)}
          </div>
          <div class="play">
            <span class="cell"><svg width="18" height="18" viewBox="0 0 18 18"><rect x="1" y="1" width="16" height="16" rx="2" fill="#fff"></rect></svg></span>
            <span class="cell"><svg width="18" height="20" viewBox="0 0 18 20"><path d="M2 2.400V17.600L16 10Z" fill="#fff" stroke="#fff" stroke-width="2" stroke-linejoin="round"></path></svg></span>
          </div>
        </section>
      </main>
    </div>`;
  }
}
